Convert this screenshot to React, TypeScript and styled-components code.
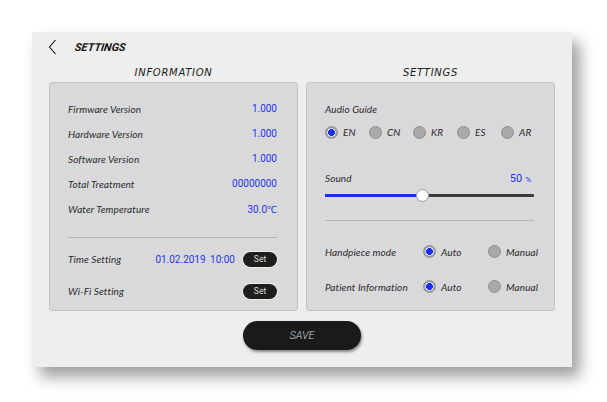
import React from "react";
import styled, { createGlobalStyle } from "styled-components";

const Global = createGlobalStyle`
  html, body { margin: 0; padding: 0; background: #ffffff; }
  body { font-family: Lato, "Liberation Sans", sans-serif; }
`;

const Page = styled.div`
  width: 607px;
  height: 402px;
  padding: 32px 0 0 32px;
  box-sizing: border-box;
`;

const Screen = styled.div`
  width: 540px;
  height: 335px;
  background: #eeeeee;
  box-shadow: 8px 10px 14px rgba(0, 0, 0, 0.38);
  display: flex;
  flex-direction: column;
  box-sizing: border-box;
  padding: 0 17px 17px 17px;
`;

const Header = styled.div`
  height: 30px;
  display: flex;
  align-items: center;
  gap: 18px;
  margin-left: -1px;
`;

const Title = styled.div`
  font-family: Roboto, sans-serif;
  font-weight: 700;
  font-style: italic;
  font-size: 11px;
  color: #111;
  transform: skewX(-8deg);
`;

const Columns = styled.div`
  display: grid;
  grid-template-columns: 249px 249px;
  column-gap: 8px;
  grid-template-rows: 20px 229px;
`;

const Heading = styled.div`
  font-family: "DejaVu Sans", Verdana, sans-serif;
  font-style: italic;
  font-size: 10px;
  color: #1a1a1a;
  letter-spacing: 0.7px;
  text-align: center;
  line-height: 21px;
`;

const Panel = styled.div`
  background: #d9d9db;
  border: 1px solid #c2c2c4;
  border-radius: 3px;
  box-sizing: border-box;
  padding: 13px 20px 0 18px;
  display: flex;
  flex-direction: column;
`;

const Row = styled.div<{ $h?: number }>`
  height: ${(p) => p.$h ?? 25}px;
  display: flex;
  align-items: center;
  justify-content: space-between;
`;

const Label = styled.span`
  font-family: Lato, "Open Sans", sans-serif;
  font-style: italic;
  font-size: 10px;
  color: #2a2a2a;
  letter-spacing: 0.1px;
`;

const Value = styled.span`
  font-family: Roboto, sans-serif;
  font-size: 10px;
  color: #2336f0;
`;

const Divider = styled.div<{ $mt: number; $mb: number }>`
  height: 1px;
  background: #b5b5b8;
  margin: ${(p) => p.$mt}px 0 ${(p) => p.$mb}px 0;
`;

const Right = styled.div`
  display: flex;
  align-items: center;
  gap: 8px;
`;

const DateText = styled(Value)`
  word-spacing: 2px;
`;

const SetButton = styled.button`
  width: 34px;
  height: 15px;
  border: none;
  border-radius: 8px;
  background: #1e1e1e;
  color: #dddddd;
  font-family: Roboto, sans-serif;
  font-size: 8.5px;
  padding: 0;
  box-shadow: 0 0 0 1px rgba(255, 255, 255, 0.5);
`;

const RadioRow = styled.div`
  display: grid;
  grid-template-columns: repeat(5, 44px);
  height: 20px;
  align-items: center;
  margin-top: 1px;
`;

const RadioItem = styled.div`
  display: flex;
  align-items: center;
  gap: 5px;
`;

const Dot = styled.span<{ $on?: boolean }>`
  width: 13px;
  height: 13px;
  border-radius: 50%;
  box-sizing: border-box;
  border: 1px solid #8e8e8e;
  background: ${(p) =>
    p.$on
      ? "radial-gradient(circle, #1a2ef2 0 3.6px, #d6d6ff 3.6px 4.3px, #a2a2a6 4.3px)"
      : "#a9a9ab"};
  flex: none;
`;

const SoundRow = styled.div`
  display: flex;
  justify-content: space-between;
  align-items: center;
  height: 20px;
  margin-top: 26px;
  padding-right: 3px;
`;

const Percent = styled.span`
  font-family: Roboto, sans-serif;
  color: #2336f0;
  font-size: 11px;
  & > small {
    font-size: 8px;
    margin-left: 3px;
  }
`;

const Slider = styled.div`
  position: relative;
  height: 14px;
  display: flex;
  align-items: center;
`;

const Track = styled.div`
  flex: 1;
  height: 3px;
  background: #3c3c3c;
  border-radius: 1px;
  display: flex;
`;

const Fill = styled.div`
  height: 3px;
  background: #1a2ef2;
`;

const Thumb = styled.div`
  position: absolute;
  top: 50%;
  width: 11px;
  height: 11px;
  margin: -6px 0 0 -6px;
  border-radius: 50%;
  background: #ffffff;
  border: 1px solid #9a9a9a;
`;

const ModeRow = styled.div`
  display: grid;
  grid-template-columns: 98px 65px auto;
  align-items: center;
  height: 35px;
`;

const SaveWrap = styled.div`
  display: flex;
  justify-content: center;
  margin-top: 10px;
`;

const SaveButton = styled.button`
  width: 118px;
  height: 29px;
  border: none;
  border-radius: 15px;
  background: #1a1a1a;
  color: #cfcfcf;
  font-family: Roboto, sans-serif;
  font-style: italic;
  font-weight: 300;
  font-size: 11px;
  box-shadow: 1px 2px 3px rgba(0, 0, 0, 0.45);
`;

const infoRows: [string, string][] = [
  ["Firmware Version", "1.000"],
  ["Hardware Version", "1.000"],
  ["Software Version", "1.000"],
  ["Total Treatment", "00000000"],
  ["Water Temperature", "30.0℃"],
];

const langs = ["EN", "CN", "KR", "ES", "AR"];

const Back = () => (
  <svg width="9" height="16" viewBox="0 0 9 16">
    <path d="M7.5 1 L1.5 8 L7.5 15" fill="none" stroke="#111" strokeWidth="1.1" />
  </svg>
);

const Mode = ({ label }: { label: string }) => (
  <ModeRow>
    <Label>{label}</Label>
    <RadioItem>
      <Dot $on />
      <Label>Auto</Label>
    </RadioItem>
    <RadioItem>
      <Dot />
      <Label>Manual</Label>
    </RadioItem>
  </ModeRow>
);

export default function App() {
  const sound = 46.5;
  return (
    <>
      <Global />
      <Page>
        <Screen>
          <Header>
            <Back />
            <Title>SETTINGS</Title>
          </Header>
          <Columns>
            <Heading>INFORMATION</Heading>
            <Heading>SETTINGS</Heading>
            <Panel>
              {infoRows.map(([l, v]) => (
                <Row key={l}>
                  <Label>{l}</Label>
                  <Value>{v}</Value>
                </Row>
              ))}
              <Divider $mt={16} $mb={5} />
              <Row $h={32}>
                <Label>Time Setting</Label>
                <Right>
                  <DateText>01.02.2019 10:00</DateText>
                  <SetButton>Set</SetButton>
                </Right>
              </Row>
              <Row $h={32}>
                <Label>Wi-Fi Setting</Label>
                <SetButton>Set</SetButton>
              </Row>
            </Panel>
            <Panel>
              <Row>
                <Label>Audio Guide</Label>
              </Row>
              <RadioRow>
                {langs.map((l, i) => (
                  <RadioItem key={l}>
                    <Dot $on={i === 0} />
                    <Label>{l}</Label>
                  </RadioItem>
                ))}
              </RadioRow>
              <SoundRow>
                <Label>Sound</Label>
                <Percent>
                  50<small>%</small>
                </Percent>
              </SoundRow>
              <Slider>
                <Track>
                  <Fill style={{ width: `${sound}%` }} />
                </Track>
                <Thumb style={{ left: `${sound}%` }} />
              </Slider>
              <Divider $mt={18} $mb={13} />
              <Mode label="Handpiece mode" />
              <Mode label="Patient Information" />
            </Panel>
          </Columns>
          <SaveWrap>
            <SaveButton>SAVE</SaveButton>
          </SaveWrap>
        </Screen>
      </Page>
    </>
  );
}
